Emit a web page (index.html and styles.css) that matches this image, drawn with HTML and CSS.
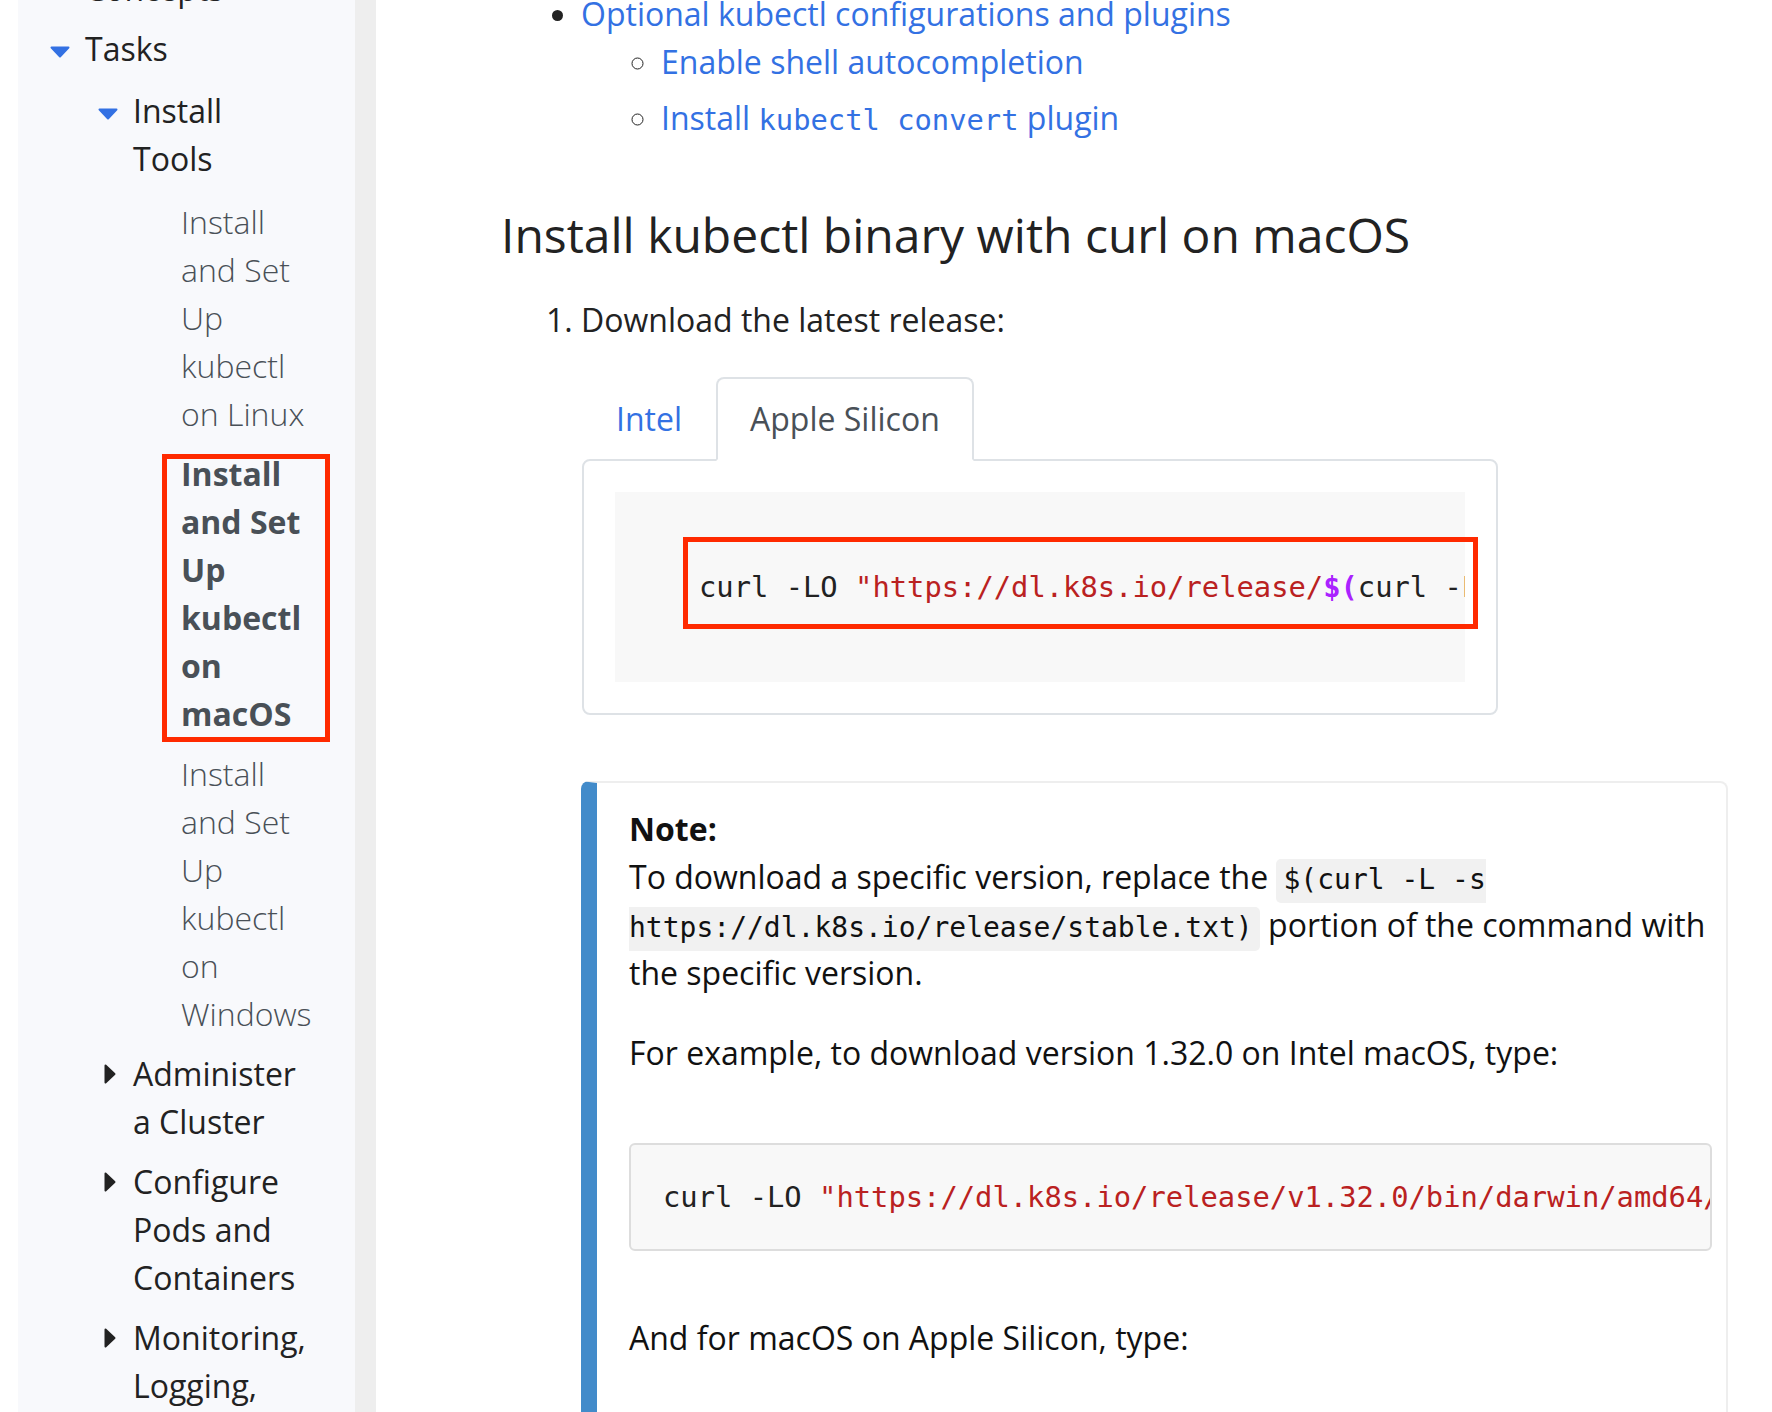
FILE: index.html
```html
<!DOCTYPE html>
<html lang="en">
<head>
<meta charset="utf-8">
<title>Install and Set Up kubectl on macOS</title>
<link rel="stylesheet" href="styles.css">
</head>
<body>
<div class="page">
  <aside class="sidebar">
    <ul class="nav lvl1">
      <li>
        <div class="row"><span class="caret"><svg class="right" viewBox="0 0 12 20" width="12" height="20"><path d="M1.5 1.5 L10.5 10 L1.5 18.5 Z" fill="currentColor" stroke="currentColor" stroke-width="2" stroke-linejoin="round"/></svg></span><a class="lbl" href="#">Concepts</a></div>
      </li>
      <li>
        <div class="row"><span class="caret"><svg class="down" viewBox="0 0 20 12" width="20" height="12"><path d="M1.5 1.5 L18.5 1.5 L10 10.5 Z" fill="currentColor" stroke="currentColor" stroke-width="2" stroke-linejoin="round"/></svg></span><a class="lbl" href="#">Tasks</a></div>
        <ul class="nav lvl2">
          <li>
            <div class="row"><span class="caret"><svg class="down" viewBox="0 0 20 12" width="20" height="12"><path d="M1.5 1.5 L18.5 1.5 L10 10.5 Z" fill="currentColor" stroke="currentColor" stroke-width="2" stroke-linejoin="round"/></svg></span><a class="lbl" href="#">Install Tools</a></div>
            <ul class="nav lvl3">
              <li class="leaf"><a href="#">Install and Set Up kubectl on Linux</a></li>
              <li class="leaf active"><a href="#">Install and Set Up kubectl on macOS</a><span class="mark mark-nav"></span></li>
              <li class="leaf"><a href="#">Install and Set Up kubectl on Windows</a></li>
            </ul>
          </li>
          <li>
            <div class="row"><span class="caret"><svg class="right" viewBox="0 0 12 20" width="12" height="20"><path d="M1.5 1.5 L10.5 10 L1.5 18.5 Z" fill="currentColor" stroke="currentColor" stroke-width="2" stroke-linejoin="round"/></svg></span><a class="lbl" href="#">Administer a Cluster</a></div>
          </li>
          <li>
            <div class="row"><span class="caret"><svg class="right" viewBox="0 0 12 20" width="12" height="20"><path d="M1.5 1.5 L10.5 10 L1.5 18.5 Z" fill="currentColor" stroke="currentColor" stroke-width="2" stroke-linejoin="round"/></svg></span><a class="lbl" href="#">Configure Pods and Containers</a></div>
          </li>
          <li>
            <div class="row"><span class="caret"><svg class="right" viewBox="0 0 12 20" width="12" height="20"><path d="M1.5 1.5 L10.5 10 L1.5 18.5 Z" fill="currentColor" stroke="currentColor" stroke-width="2" stroke-linejoin="round"/></svg></span><a class="lbl" href="#">Monitoring, Logging, and Debugging</a></div>
          </li>
        </ul>
      </li>
    </ul>
  </aside>
  <div class="rail"></div>
  <main class="content">
    <ul class="toc">
      <li><a href="#">Optional kubectl configurations and plugins</a>
        <ul>
          <li><a href="#">Enable shell autocompletion</a></li>
          <li class="spaced"><a href="#">Install <code>kubectl convert</code> plugin</a></li>
        </ul>
      </li>
    </ul>

    <h2>Install kubectl binary with curl on macOS</h2>

    <ol class="steps">
      <li>
        <p>Download the latest release:</p>
        <div class="tabs">
          <ul class="tab-nav">
            <li class="tab">Intel</li>
            <li class="tab active">Apple Silicon</li>
          </ul>
          <div class="tab-content">
            <pre class="code"><code>curl -LO <span class="s">"https://dl.k8s.io/release/</span><span class="k">$(</span>curl -L -s https://dl.k8s.io/release/stable.txt<span class="k">)</span><span class="s">/bin/darwin/arm64/kubectl"</span></code></pre>
            <span class="mark mark-code"></span>
          </div>
        </div>

        <div class="note">
          <p class="note-title">Note:</p>
          <p>To download a specific version, replace the <code>$(curl -L -s https://dl.k8s.io/release/stable.txt)</code> portion of the command with the specific version.</p>
          <p>For example, to download version 1.32.0 on Intel macOS, type:</p>
          <pre class="code boxed"><code>curl -LO <span class="s">"https://dl.k8s.io/release/v1.32.0/bin/darwin/amd64/kubectl"</span></code></pre>
          <p>And for macOS on Apple Silicon, type:</p>
          <pre class="code boxed"><code>curl -LO <span class="s">"https://dl.k8s.io/release/v1.32.0/bin/darwin/arm64/kubectl"</span></code></pre>
        </div>
      </li>
    </ol>
  </main>
</div>
</body>
</html>
```

FILE: styles.css
```css
html, body {
  margin: 0;
  padding: 0;
  height: 100%;
  overflow: hidden;
}

body {
  font-family: "Open Sans", "Noto Sans", sans-serif;
  font-size: 32px;
  line-height: 48px;
  color: #222;
  background: #fff;
}

.page {
  display: flex;
  height: 1412px;
}

/* ---------- sidebar ---------- */
.sidebar {
  flex: none;
  margin-left: 18px;
  width: 337px;
  box-sizing: border-box;
  background: #f8f9fc;
  padding: 0 47px 0 32px;
}

.rail {
  flex: none;
  width: 21px;
  background: #eeeeee;
}

.nav {
  list-style: none;
  margin: 0;
  padding: 0;
}

.lvl1 {
  margin-top: -35px;
}

.nav li + li {
  margin-top: 12px;
}

.lvl2 {
  margin-top: 14px;
  padding-left: 48px;
}

.lvl3 {
  margin-top: 15px;
  padding-left: 48px;
  margin-right: -8px;
}

.row {
  display: flex;
  align-items: flex-start;
}

.caret {
  flex: none;
  width: 35px;
  height: 48px;
}

.caret svg {
  display: block;
}

.caret .down {
  margin-top: 21px;
  color: #3371e3;
}

.caret .right {
  margin-top: 14px;
  margin-left: 6px;
  color: #222;
}

.lbl {
  color: #222;
  text-decoration: none;
}

.leaf {
  position: relative;
  padding-left: 35px;
}

.leaf a {
  color: #495057;
  font-weight: 300;
  text-decoration: none;
}

.leaf.active a {
  font-weight: 700;
}

.mark {
  position: absolute;
  box-sizing: border-box;
  border: 5px solid #ff2a00;
}

.mark-nav {
  left: 16px;
  top: 4px;
  width: 168px;
  height: 288px;
}

/* ---------- content ---------- */
.content {
  flex: 1;
  min-width: 0;
  padding: 0 44px 0 125px;
}

.content a {
  color: #3371e3;
  text-decoration: none;
}

code {
  font-family: "DejaVu Sans Mono", monospace;
}

.toc {
  margin: -10.4px 0 0;
  padding-left: 80px;
}

.toc ul {
  margin: 0;
  padding-left: 80px;
}

.toc .spaced {
  margin-top: 8px;
}

.toc code {
  font-size: 28.8px;
  line-height: 1;
}

h2 {
  font-size: 48px;
  line-height: 57.6px;
  font-weight: 400;
  color: #222;
  margin: 64.3px 0 32px;
}

.steps {
  margin: 0;
  padding-left: 80px;
}

.steps > li > p {
  margin: 0 0 33px;
}

/* tabs */
.tabs {
  margin-left: 1px;
  width: 916px;
}

.tab-nav {
  position: relative;
  z-index: 1;
  display: flex;
  list-style: none;
  margin: 0 0 -2px;
  padding: 0;
}

.tab {
  padding: 16px 32px;
  border: 2px solid transparent;
  border-radius: 8px 8px 0 0;
  color: #3371e3;
}

.tab.active {
  color: #495057;
  background: #fff;
  border-color: #dee2e6 #dee2e6 #fff;
}

.tab-content {
  position: relative;
  border: 2px solid #dee2e6;
  border-radius: 8px;
  padding: 31px;
}

.code {
  margin: 0;
  background: #f8f8f8;
  color: #222;
  font-family: "DejaVu Sans Mono", monospace;
  font-size: 28.8px;
  line-height: 48px;
  white-space: pre;
  overflow: hidden;
}

.code code {
  font-size: inherit;
}

.tab-content .code {
  padding: 71px 0 71px 84px;
}

.mark-code {
  left: 99px;
  top: 76px;
  width: 795px;
  height: 92px;
}

.s {
  color: #ba2121;
}

.k {
  color: #aa22ff;
  font-weight: 700;
}

/* note */
.note {
  margin-top: 66px;
  border: 2px solid #eeeeee;
  border-left: 16px solid #428bca;
  border-radius: 8px;
  padding: 22px 14px 0 32px;
  color: #111;
}

.note p {
  margin: 0 0 32px;
}

.note .note-title {
  margin: 0;
  font-weight: 700;
}

.note p code {
  font-size: 28px;
  line-height: 1;
  background: #f1f1f1;
  border-radius: 5px;
  padding: 4px 7px 7px;
}

.boxed {
  border: 2px solid #dddddd;
  border-radius: 6px;
  padding: 28px 0 28px 32px;
  margin: 66px 0 63px;
}
```
